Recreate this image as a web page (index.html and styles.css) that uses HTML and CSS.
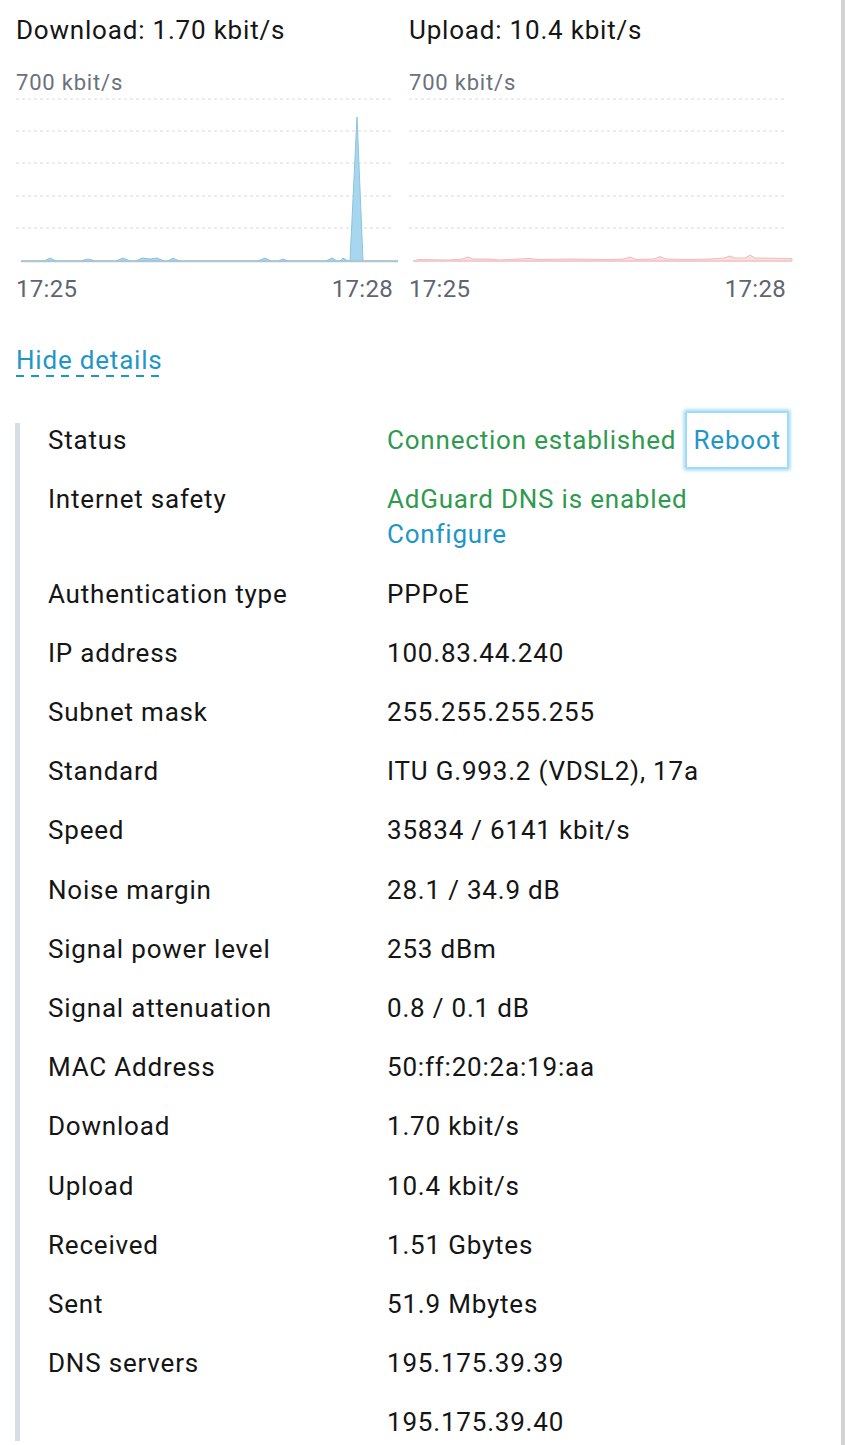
FILE: index.html
```html
<!DOCTYPE html>
<html lang="en">
<head>
  <meta charset="UTF-8">
  <meta name="viewport" content="width=device-width, initial-scale=1.0">
  <title>Internet connection</title>
  <link rel="stylesheet" href="styles.css">
</head>
<body>
  <div class="page">
    <div class="charts">
      <div class="chart">
        <div class="chart-title">Download: 1.70 kbit/s</div>
        <div class="chart-max">700 kbit/s</div>
        <svg class="chart-plot" width="384" height="168" viewBox="0 0 384 168">
          <g class="grid">
            <line x1="0" y1="2" x2="378" y2="2"/>
            <line x1="0" y1="34" x2="378" y2="34"/>
            <line x1="0" y1="66" x2="378" y2="66"/>
            <line x1="0" y1="99" x2="378" y2="99"/>
            <line x1="0" y1="131" x2="378" y2="131"/>
          </g>
          <path class="area-down" d="M5,164 L28,164 L34,161 L40,164 L64,164 L72,162 L80,164 L100,164 L107,161 L114,164 L120,164 L126,161 L134,162 L141,161 L148,164 L152,164 L157,161 L163,164 L242,164 L249,161 L255,164 L262,164 L267,162 L272,164 L310,164 L316,161 L321,164 L324,164 L327,161 L332,164 L334,164 L341,20 L347,164 L382,164 Z"/>
          <line class="base-down" x1="5" y1="164.5" x2="382" y2="164.5"/>
        </svg>
        <div class="chart-times"><span>17:25</span><span>17:28</span></div>
      </div>
      <div class="chart">
        <div class="chart-title">Upload: 10.4 kbit/s</div>
        <div class="chart-max">700 kbit/s</div>
        <svg class="chart-plot" width="384" height="168" viewBox="0 0 384 168">
          <g class="grid">
            <line x1="0" y1="2" x2="378" y2="2"/>
            <line x1="0" y1="34" x2="378" y2="34"/>
            <line x1="0" y1="66" x2="378" y2="66"/>
            <line x1="0" y1="99" x2="378" y2="99"/>
            <line x1="0" y1="131" x2="378" y2="131"/>
          </g>
          <path class="area-up" d="M4,164 L10,162.5 L40,163 L53,162 L59,160 L64,162 L80,162 L90,163 L110,162 L120,161.5 L130,162.5 L160,162 L200,162.5 L215,162 L221,160 L227,162.5 L245,162 L251,159.5 L257,162 L280,162.5 L300,162 L315,161 L321,159 L326,161 L336,161 L341,158 L346,161 L383,161.5 L383,164 Z"/>
          <line class="base-up" x1="4" y1="164" x2="383" y2="164"/>
        </svg>
        <div class="chart-times"><span>17:25</span><span>17:28</span></div>
      </div>
    </div>

    <div class="toggle"><a class="dashed-link" href="#">Hide details</a></div>

    <div class="details">
      <div class="label">Status</div>
      <div class="value"><span class="ok">Connection established</span> <a class="btn-link" href="#">Reboot</a></div>

      <div class="label">Internet safety</div>
      <div class="value">
        <div class="ok">AdGuard DNS is enabled</div>
        <div><a class="link" href="#">Configure</a></div>
      </div>

      <div class="label">Authentication type</div>
      <div class="value">PPPoE</div>

      <div class="label">IP address</div>
      <div class="value">100.83.44.240</div>

      <div class="label">Subnet mask</div>
      <div class="value">255.255.255.255</div>

      <div class="label">Standard</div>
      <div class="value">ITU G.993.2 (VDSL2), 17a</div>

      <div class="label">Speed</div>
      <div class="value">35834 / 6141 kbit/s</div>

      <div class="label">Noise margin</div>
      <div class="value">28.1 / 34.9 dB</div>

      <div class="label">Signal power level</div>
      <div class="value">253 dBm</div>

      <div class="label">Signal attenuation</div>
      <div class="value">0.8 / 0.1 dB</div>

      <div class="label">MAC Address</div>
      <div class="value">50:ff:20:2a:19:aa</div>

      <div class="label">Download</div>
      <div class="value">1.70 kbit/s</div>

      <div class="label">Upload</div>
      <div class="value">10.4 kbit/s</div>

      <div class="label">Received</div>
      <div class="value">1.51 Gbytes</div>

      <div class="label">Sent</div>
      <div class="value">51.9 Mbytes</div>

      <div class="label">DNS servers</div>
      <div class="value">195.175.39.39</div>

      <div class="label"></div>
      <div class="value">195.175.39.40</div>
    </div>
  </div>
</body>
</html>
```

FILE: styles.css
```css
body {
  margin: 0;
  font-family: Roboto, "Liberation Sans", sans-serif;
  color: #151515;
  background: #fff;
}
.page {
  box-sizing: border-box;
  width: 845px;
  min-height: 1445px;
  padding: 13px 0 0 16px;
  border-right: 4px solid #d3d3d3;
}
.charts {
  display: grid;
  grid-template-columns: 393px 393px;
}
.chart-title {
  font-size: 26px;
  line-height: 35px;
  letter-spacing: 0.8px;
}
.chart-max {
  margin-top: 21px;
  font-size: 22px;
  line-height: 28px;
  letter-spacing: 0.8px;
  color: #6b717c;
}
.chart-plot {
  display: block;
}
.grid line {
  stroke: #e6e6e6;
  stroke-width: 1.5;
  stroke-dasharray: 3 3;
}
.area-down {
  fill: #a6d7ee;
  stroke: #8dc3dc;
  stroke-width: 1;
}
.base-down {
  stroke: #b3c3cd;
  stroke-width: 1.5;
}
.area-up {
  fill: #f9e0e0;
  stroke: #f0bcbc;
  stroke-width: 1;
}
.base-up {
  stroke: #f3c9c9;
  stroke-width: 1.5;
}
.chart-times {
  display: flex;
  justify-content: space-between;
  width: 377px;
  margin-top: 9px;
  font-size: 24px;
  line-height: 30px;
  letter-spacing: 0.3px;
  color: #5f6570;
}
.toggle {
  margin-top: 39px;
  font-size: 26px;
  line-height: 35px;
  letter-spacing: 0.8px;
}
.dashed-link {
  color: #1f96c8;
  text-decoration: none;
  padding-bottom: 2px;
  background-image: repeating-linear-gradient(to right, #1f96c8 0 8px, transparent 8px 15px);
  background-size: 100% 2px;
  background-position: left bottom;
  background-repeat: no-repeat;
}
.details {
  display: grid;
  grid-template-columns: 339px 1fr;
  row-gap: 24px;
  margin-top: 45px;
  margin-left: -1px;
  margin-right: 40px;
  padding-left: 28px;
  border-left: 5px solid #d7dde4;
  font-size: 26px;
  line-height: 35.2px;
  letter-spacing: 0.8px;
}
.ok {
  color: #2e9a4e;
}
.link {
  color: #1f96c8;
  text-decoration: none;
}
.btn-link {
  margin-left: 2px;
  padding: 12px 6px;
  color: #1f96c8;
  text-decoration: none;
  border: 2px solid #a3daf3;
  border-radius: 2px;
  box-shadow: 0 0 3px 2px #b6e2f6;
}
```
